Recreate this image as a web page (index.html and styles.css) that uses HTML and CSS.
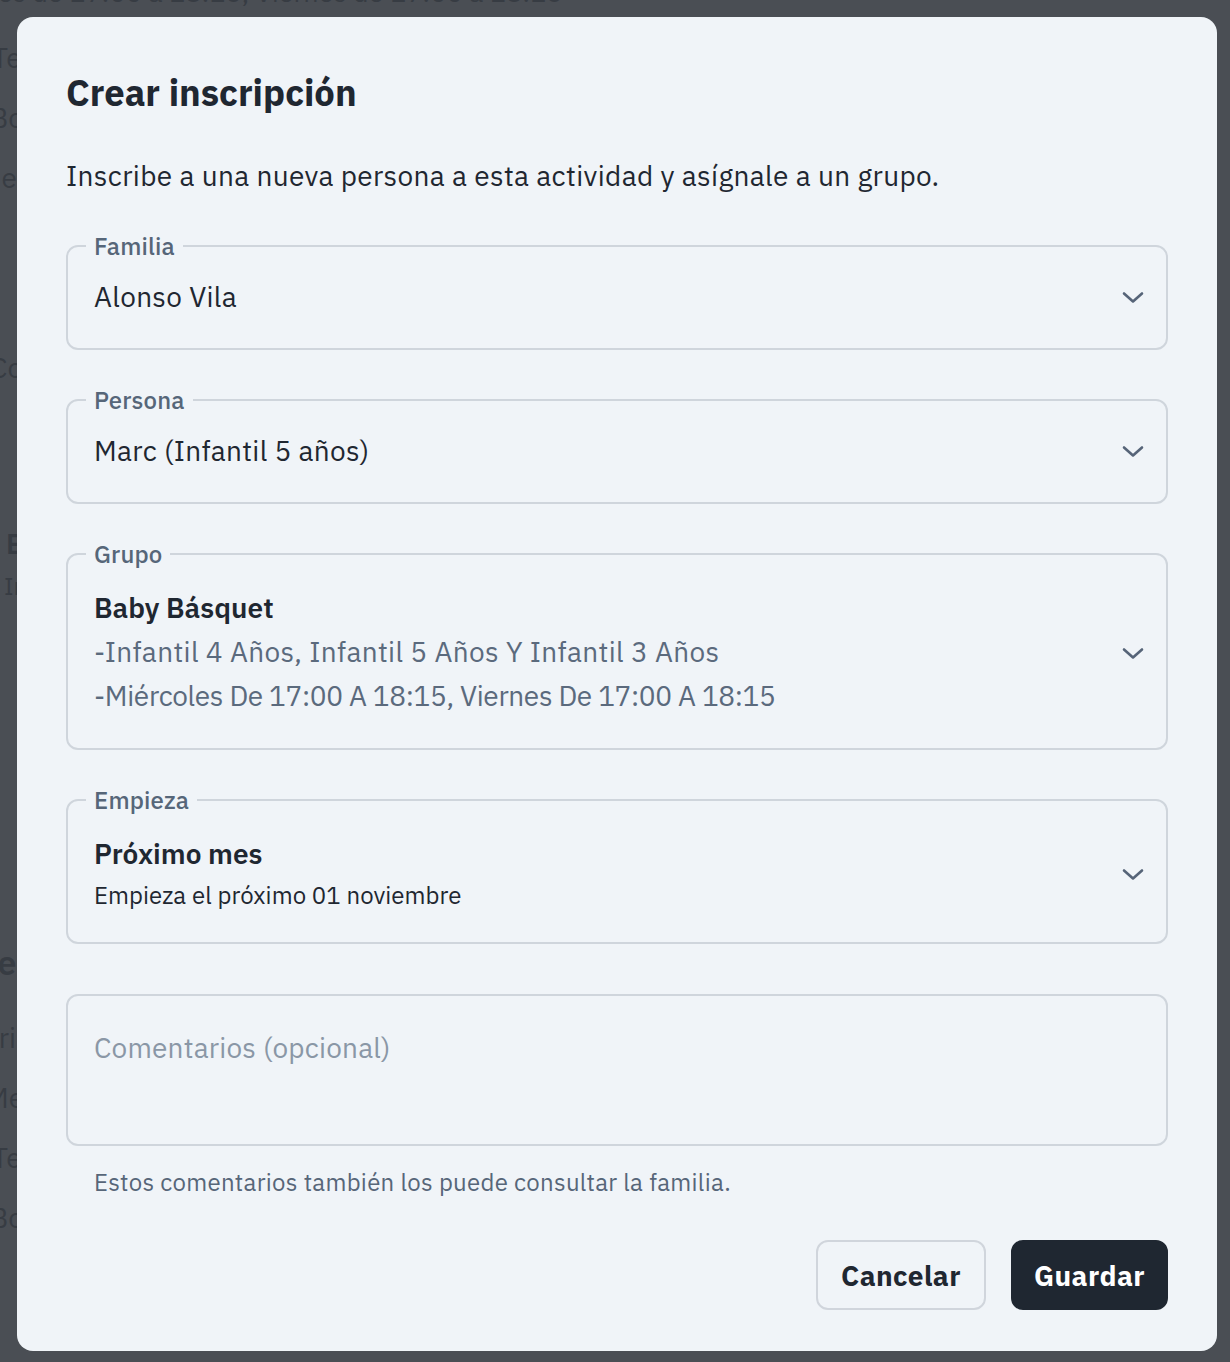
FILE: index.html
```html
<!DOCTYPE html>
<html lang="es">
<head>
<meta charset="utf-8">
<title>Crear inscripción</title>
<link rel="stylesheet" href="styles.css">
</head>
<body>
<div class="page">
  <p class="bg-line bg-top">es de 17:00 a 18:15, Viernes de 17:00 a 18:15</p>
  <p class="bg-line l1">Ten</p>
  <p class="bg-line l2">Bo</p>
  <p class="bg-line l3">le e</p>
  <p class="bg-line l4">Co</p>
  <p class="bg-line l5 strong">E</p>
  <p class="bg-line l6">In</p>
  <p class="bg-line l7 strong">Te</p>
  <p class="bg-line l8">Tri</p>
  <p class="bg-line l9">Mes</p>
  <p class="bg-line l10">Ten</p>
  <p class="bg-line l11">Bo</p>
</div>
<div class="overlay">
  <div class="modal">
    <h1 class="title">Crear inscripción</h1>
    <p class="subtitle">Inscribe a una nueva persona a esta actividad y asígnale a un grupo.</p>

    <fieldset class="field">
      <legend class="legend">Familia</legend>
      <div class="select-row">
        <div class="value">Alonso Vila</div>
        <svg class="chevron" viewBox="0 0 24 24" width="24" height="24"><path d="M3 7.5l9 8 9-8" fill="none" stroke="currentColor" stroke-width="2.6" stroke-linecap="round" stroke-linejoin="round"/></svg>
      </div>
    </fieldset>

    <fieldset class="field">
      <legend class="legend">Persona</legend>
      <div class="select-row">
        <div class="value">Marc (Infantil 5 años)</div>
        <svg class="chevron" viewBox="0 0 24 24" width="24" height="24"><path d="M3 7.5l9 8 9-8" fill="none" stroke="currentColor" stroke-width="2.6" stroke-linecap="round" stroke-linejoin="round"/></svg>
      </div>
    </fieldset>

    <fieldset class="field">
      <legend class="legend">Grupo</legend>
      <div class="select-row group">
        <div class="group-value">
          <div class="strong-value">Baby Básquet</div>
          <div class="detail first">-Infantil 4 Años, Infantil 5 Años Y Infantil 3 Años</div>
          <div class="detail">-Miércoles De 17:00 A 18:15, Viernes De 17:00 A 18:15</div>
        </div>
        <svg class="chevron" viewBox="0 0 24 24" width="24" height="24"><path d="M3 7.5l9 8 9-8" fill="none" stroke="currentColor" stroke-width="2.6" stroke-linecap="round" stroke-linejoin="round"/></svg>
      </div>
    </fieldset>

    <fieldset class="field">
      <legend class="legend">Empieza</legend>
      <div class="select-row start">
        <div class="group-value">
          <div class="strong-value">Próximo mes</div>
          <div class="sub-value">Empieza el próximo 01 noviembre</div>
        </div>
        <svg class="chevron" viewBox="0 0 24 24" width="24" height="24"><path d="M3 7.5l9 8 9-8" fill="none" stroke="currentColor" stroke-width="2.6" stroke-linecap="round" stroke-linejoin="round"/></svg>
      </div>
    </fieldset>

    <div class="textarea">Comentarios (opcional)</div>
    <p class="helper">Estos comentarios también los puede consultar la familia.</p>

    <div class="actions">
      <button class="btn btn-outline">Cancelar</button>
      <button class="btn btn-dark">Guardar</button>
    </div>
  </div>
</div>
</body>
</html>
```

FILE: styles.css
```css
* { box-sizing: border-box; }
html, body { margin: 0; padding: 0; }
body {
  width: 1230px;
  height: 1362px;
  overflow: hidden;
  background: #eef1f4;
  font-family: "IBM Plex Sans", Inter, "Liberation Sans", sans-serif;
  position: relative;
}
.page {
  position: absolute;
  inset: 0;
  font-size: 28px;
  line-height: 36px;
  color: #3a4048;
}
.bg-line { position: absolute; margin: 0; white-space: nowrap; }
.bg-top { top: -26px; left: -2px; font-size: 27px; }
.l1 { top: 40px; left: -8px; }
.l2 { top: 100px; left: -10px; }
.l3 { top: 160px; left: -28px; }
.l4 { top: 350px; left: -10px; }
.l5 { top: 526px; left: 6px; }
.l6 { top: 568px; left: 4px; font-size: 24px; }
.l7 { top: 944px; left: -20px; font-size: 34px; }
.l8 { top: 1020px; left: -16px; }
.l9 { top: 1080px; left: -14px; }
.l10 { top: 1140px; left: -8px; }
.l11 { top: 1200px; left: -10px; }
.strong { font-weight: 600; }

.overlay {
  position: absolute;
  inset: 0;
  background: rgba(55, 60, 67, 0.9);
  padding: 17px 13px 11px 17px;
}
.modal {
  width: 1200px;
  height: 1334px;
  background: #f0f4f8;
  border-radius: 16px;
  padding: 54px 49px 41px 49px;
  display: flex;
  flex-direction: column;
}
.title {
  margin: 0;
  font-size: 36.4px;
  font-weight: 700;
  color: #1f2731;
  line-height: 44px;
}
.subtitle {
  margin: 43px 0 0 0;
  font-size: 28px;
  line-height: 36px;
  letter-spacing: 0.35px;
  color: #1f2731;
}
.field {
  margin: 38px 0 0 0;
  padding: 0 26px;
  border: 2px solid #cfd5dc;
  border-radius: 12px;
  min-width: 0;
}
.field + .field { margin-top: 36px; }
.legend {
  padding: 0 8px;
  margin-left: -8px;
  font-size: 24px;
  line-height: 28px;
  font-weight: 500;
  letter-spacing: 0.15px;
  color: #566679;
}
.select-row {
  display: flex;
  align-items: center;
  justify-content: space-between;
  padding: 17px 0 31px 0;
}
.select-row.group { padding: 20px 0 30px 0; }
.select-row.start { padding: 20px 0 29px 0; }
.value {
  font-size: 28px;
  color: #1f2731;
  line-height: 40px;
  letter-spacing: 0.3px;
}
.chevron {
  color: #566478;
  flex: none;
  margin: 2px -5px 0 0;
}
.group-value { display: flex; flex-direction: column; }
.strong-value {
  font-size: 28px;
  font-weight: 600;
  color: #1f2731;
  line-height: 40px;
}
.detail {
  font-size: 28px;
  color: #5b6a7d;
  line-height: 44px;
  letter-spacing: -0.35px;
}
.detail.first { margin-top: 2px; letter-spacing: 0.34px; }
.sub-value {
  font-size: 24px;
  color: #1f2731;
  line-height: 36px;
  letter-spacing: 0.05px;
  margin-top: 3px;
}
.textarea {
  margin-top: 50px;
  height: 152px;
  border: 2px solid #cfd5dc;
  border-radius: 12px;
  padding: 34px 26px 0 26px;
  font-size: 28px;
  line-height: 36px;
  letter-spacing: 0.18px;
  color: #8a97a6;
}
.helper {
  margin: 21px 0 0 28px;
  font-size: 24px;
  line-height: 30px;
  letter-spacing: 0.28px;
  color: #576679;
}
.actions {
  margin-top: 43px;
  display: flex;
  justify-content: flex-end;
  gap: 25px;
}
.btn {
  height: 70px;
  border-radius: 12px;
  font-family: inherit;
  font-size: 28px;
  font-weight: 700;
  letter-spacing: 0.4px;
  padding: 0;
  cursor: pointer;
}
.btn-outline {
  background: #f0f4f8;
  border: 2px solid #d0d5dc;
  color: #1f2731;
  width: 170px;
}
.btn-dark {
  background: #1f2731;
  border: 2px solid #1f2731;
  color: #ffffff;
  width: 157px;
}
```
